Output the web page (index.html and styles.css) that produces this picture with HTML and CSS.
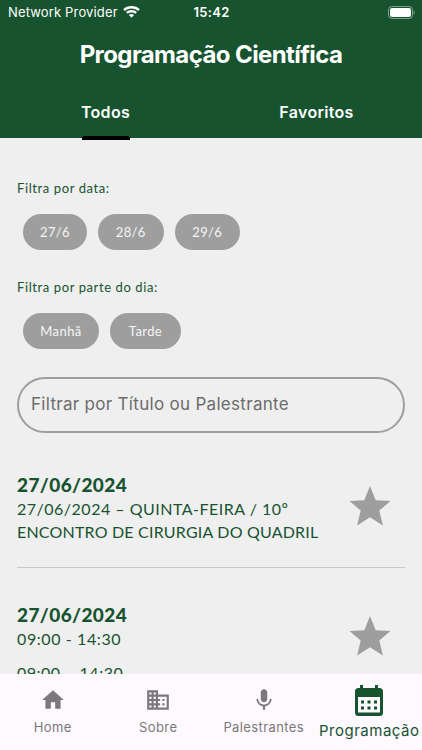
FILE: index.html
```html
<!DOCTYPE html>
<html lang="pt">
<head>
  <meta charset="UTF-8">
  <meta name="viewport" content="width=device-width, initial-scale=1.0">
  <title>Programação Científica</title>
  <link rel="stylesheet" href="styles.css">
</head>
<body>
  <header>
    <div class="status-bar">
      <div class="provider">
        <span>Network Provider</span>
        <svg width="17" height="12" viewBox="0 0 17 12" fill="#fff">
          <path d="M8.5 0C5.3 0 2.4 1.2.2 3.2l1.6 1.7C3.6 3.3 5.9 2.4 8.5 2.4s4.9.9 6.7 2.500l1.600-1.700C14.600 1.200 11.700 0 8.500 0z"/>
          <path d="M8.500 4.100c-2.100 0-4 .8-5.500 2l1.700 1.700c1-.9 2.300-1.400 3.800-1.400s2.800.5 3.800 1.400L14 6.100c-1.500-1.200-3.400-2-5.500-2z"/>
          <path d="M8.500 8.100c-1 0-1.900.3-2.600.9l2.600 2.700L11.100 9c-.7-.6-1.600-.9-2.600-.9z"/>
        </svg>
      </div>
      <div class="time">15:42</div>
      <svg class="battery" width="27" height="13" viewBox="0 0 27 13">
        <rect x=".5" y=".5" width="24" height="12" rx="3.500" fill="none" stroke="#fff" stroke-opacity=".45"/>
        <rect x="2" y="2" width="21" height="9" rx="2.200" fill="#fff"/>
        <path d="M25.700 4.500c1.300.5 1.300 3.500 0 4z" fill="#fff" fill-opacity=".5"/>
      </svg>
    </div>
    <h1>Programação Científica</h1>
    <nav class="tabs">
      <a class="tab active" href="#">Todos</a>
      <a class="tab" href="#">Favoritos</a>
    </nav>
  </header>

  <main>
    <div class="filter-label">Filtra por data:</div>
    <div class="chips">
      <button class="chip">27/6</button>
      <button class="chip chip-wide">28/6</button>
      <button class="chip chip-wide">29/6</button>
    </div>

    <div class="filter-label">Filtra por parte do dia:</div>
    <div class="chips">
      <button class="chip chip-morning">Manhã</button>
      <button class="chip chip-afternoon">Tarde</button>
    </div>

    <input class="search" type="text" placeholder="Filtrar por Título ou Palestrante">

    <div class="event">
      <div class="event-body">
        <div class="event-date">27/06/2024</div>
        <div class="event-text">27/06/2024 – QUINTA-FEIRA / 10º</div>
        <div class="event-text second-line">ENCONTRO DE CIRURGIA DO QUADRIL</div>
      </div>
      <svg class="star" width="42" height="40" viewBox="0 0 42 40">
        <path d="M21 0l5.700 14.200L41.500 15 30.300 24.600 33.900 39.500 21 31.300 8.100 39.500l3.600-14.900L.5 15l14.800-.8z"/>
      </svg>
    </div>

    <div class="event">
      <div class="event-body">
        <div class="event-date">27/06/2024</div>
        <div class="event-text time-range">09:00 - 14:30</div>
        <div class="event-text session">09:00 – 14:30</div>
      </div>
      <svg class="star" width="42" height="40" viewBox="0 0 42 40">
        <path d="M21 0l5.700 14.200L41.500 15 30.300 24.600 33.900 39.500 21 31.300 8.100 39.500l3.600-14.900L.5 15l14.800-.8z"/>
      </svg>
    </div>
  </main>

  <nav class="bottom-nav">
    <a class="nav-item" href="#">
      <svg width="26" height="26" viewBox="0 0 24 24"><path d="M10 20v-6h4v6h5v-8h3L12 3 2 12h3v8z"/></svg>
      <span>Home</span>
    </a>
    <a class="nav-item" href="#">
      <svg width="26" height="26" viewBox="0 0 24 24"><path d="M12 7V3H2v18h20V7H12zM6 19H4v-2h2v2zm0-4H4v-2h2v2zm0-4H4V9h2v2zm0-4H4V5h2v2zm4 12H8v-2h2v2zm0-4H8v-2h2v2zm0-4H8V9h2v2zm0-4H8V5h2v2zm10 12h-8v-2h2v-2h-2v-2h2v-2h-2V9h8v10zm-2-8h-2v2h2v-2zm0 4h-2v2h2v-2z"/></svg>
      <span>Sobre</span>
    </a>
    <a class="nav-item" href="#">
      <svg width="26" height="26" viewBox="0 0 24 24"><path d="M12 14c1.660 0 2.990-1.340 2.990-3L15 5c0-1.660-1.340-3-3-3S9 3.340 9 5v6c0 1.660 1.340 3 3 3zm5.300-3c0 3-2.540 5.100-5.300 5.100S6.700 14 6.700 11H5c0 3.410 2.720 6.230 6 6.720V21h2v-3.280c3.280-.48 6-3.300 6-6.720h-1.700z"/></svg>
      <span>Palestrantes</span>
    </a>
    <a class="nav-item active" href="#">
      <svg width="28" height="31" viewBox="0 0 28 31">
        <path fill-rule="evenodd" d="M5 0h3v3h12V0h3v3h1.500A3.500 3.500 0 0 1 28 6.500v21a3.500 3.500 0 0 1-3.500 3.500h-21A3.500 3.500 0 0 1 0 27.500v-21A3.500 3.500 0 0 1 3.500 3H5zM3 12v15.500h22V12z"/>
        <path d="M6 15.500h3v3H6zM12.500 15.500h3v3h-3zM19 15.500h3v3h-3zM6 21.500h3v3H6zM12.500 21.500h3v3h-3zM19 21.500h3v3h-3z"/>
      </svg>
      <span>Programação</span>
    </a>
  </nav>
</body>
</html>
```
FILE: styles.css
```css
* {
  box-sizing: border-box;
}
body {
  margin: 0;
  height: 750px;
  display: flex;
  flex-direction: column;
  overflow: hidden;
  font-family: Inter, sans-serif;
  background-color: #efefef;
  color: #17532f;
}
header {
  flex: none;
  height: 138px;
  background-color: #17532f;
  color: white;
}
.status-bar {
  height: 24px;
  padding: 0 7px 0 8px;
  display: grid;
  grid-template-columns: 1fr auto 1fr;
  align-items: center;
  font-size: 13px;
}
.provider {
  display: flex;
  align-items: center;
  gap: 5px;
  letter-spacing: 0.15px;
}
.time {
  font-weight: 600;
  letter-spacing: 0.3px;
}
.battery {
  justify-self: end;
}
h1 {
  margin: 15px 0 0;
  font-size: 24px;
  line-height: 32px;
  font-weight: 700;
  letter-spacing: -0.6px;
  text-align: center;
}
.tabs {
  display: flex;
  height: 68px;
}
.tab {
  flex: 1;
  display: flex;
  flex-direction: column;
  align-items: center;
  padding-top: 31px;
  color: white;
  font-size: 16px;
  line-height: 20px;
  font-weight: 600;
  letter-spacing: 0.3px;
  text-decoration: none;
}
.tab.active::after {
  content: "";
  flex: none;
  width: 48px;
  height: 4px;
  margin-top: 14px;
  background-color: black;
  border-radius: 3px 3px 0 0;
}
main {
  flex: 1;
  min-height: 0;
  overflow: hidden;
  padding: 40px 17px 0;
  font-family: Lato, sans-serif;
}
.filter-label {
  font-size: 13px;
  line-height: 20px;
  letter-spacing: 0.6px;
}
.chips {
  display: flex;
  gap: 11px;
  padding: 16px 6px 27px;
}
.chip {
  width: 64px;
  height: 36px;
  padding: 0;
  border: none;
  border-radius: 18px;
  background-color: #9e9e9e;
  color: #f5f5f5;
  font-family: inherit;
  font-size: 13px;
  letter-spacing: 0.4px;
}
.chip-wide {
  width: 65.5px;
}
.chip-morning {
  width: 76px;
}
.chip-afternoon {
  width: 71px;
}
.search {
  display: block;
  width: 100%;
  height: 56px;
  margin-top: 1px;
  padding: 0 12px 3px;
  border: 2px solid #9e9e9e;
  border-radius: 28px;
  background-color: transparent;
  font-family: Inter, sans-serif;
  font-size: 17px;
  letter-spacing: 0.3px;
}
.search::placeholder {
  color: #6c6c6c;
  opacity: 1;
}
.event {
  display: flex;
  justify-content: space-between;
  height: 129px;
  margin-top: 5px;
  padding-top: 35px;
}
.event + .event {
  margin-top: 0;
  border-top: 1px solid #cac8cc;
}
.event-date {
  font-size: 19px;
  line-height: 24px;
  font-weight: 900;
  letter-spacing: 0.4px;
}
.event-text {
  font-size: 16px;
  line-height: 23px;
  letter-spacing: 0.5px;
  white-space: nowrap;
}
.second-line {
  letter-spacing: 0.2px;
}
.time-range {
  letter-spacing: 0.6px;
}
.session {
  margin-top: 11px;
}
.star {
  flex: none;
  margin: 13px 14px 0 0;
  fill: #9e9e9e;
}
.bottom-nav {
  flex: none;
  height: 76px;
  display: grid;
  grid-template-columns: repeat(4, 1fr);
  background-color: #fef9ff;
}
.nav-item {
  display: flex;
  flex-direction: column;
  align-items: center;
  padding-top: 13px;
  color: #7b787b;
  font-size: 13px;
  line-height: 20px;
  letter-spacing: 0.4px;
  text-decoration: none;
}
.nav-item svg {
  fill: currentColor;
}
.nav-item span {
  margin-top: 4px;
}
.nav-item.active {
  padding-top: 11px;
  color: #17532f;
  font-size: 15px;
  letter-spacing: 0.5px;
}
.nav-item.active span {
  margin-top: 5px;
}
```
